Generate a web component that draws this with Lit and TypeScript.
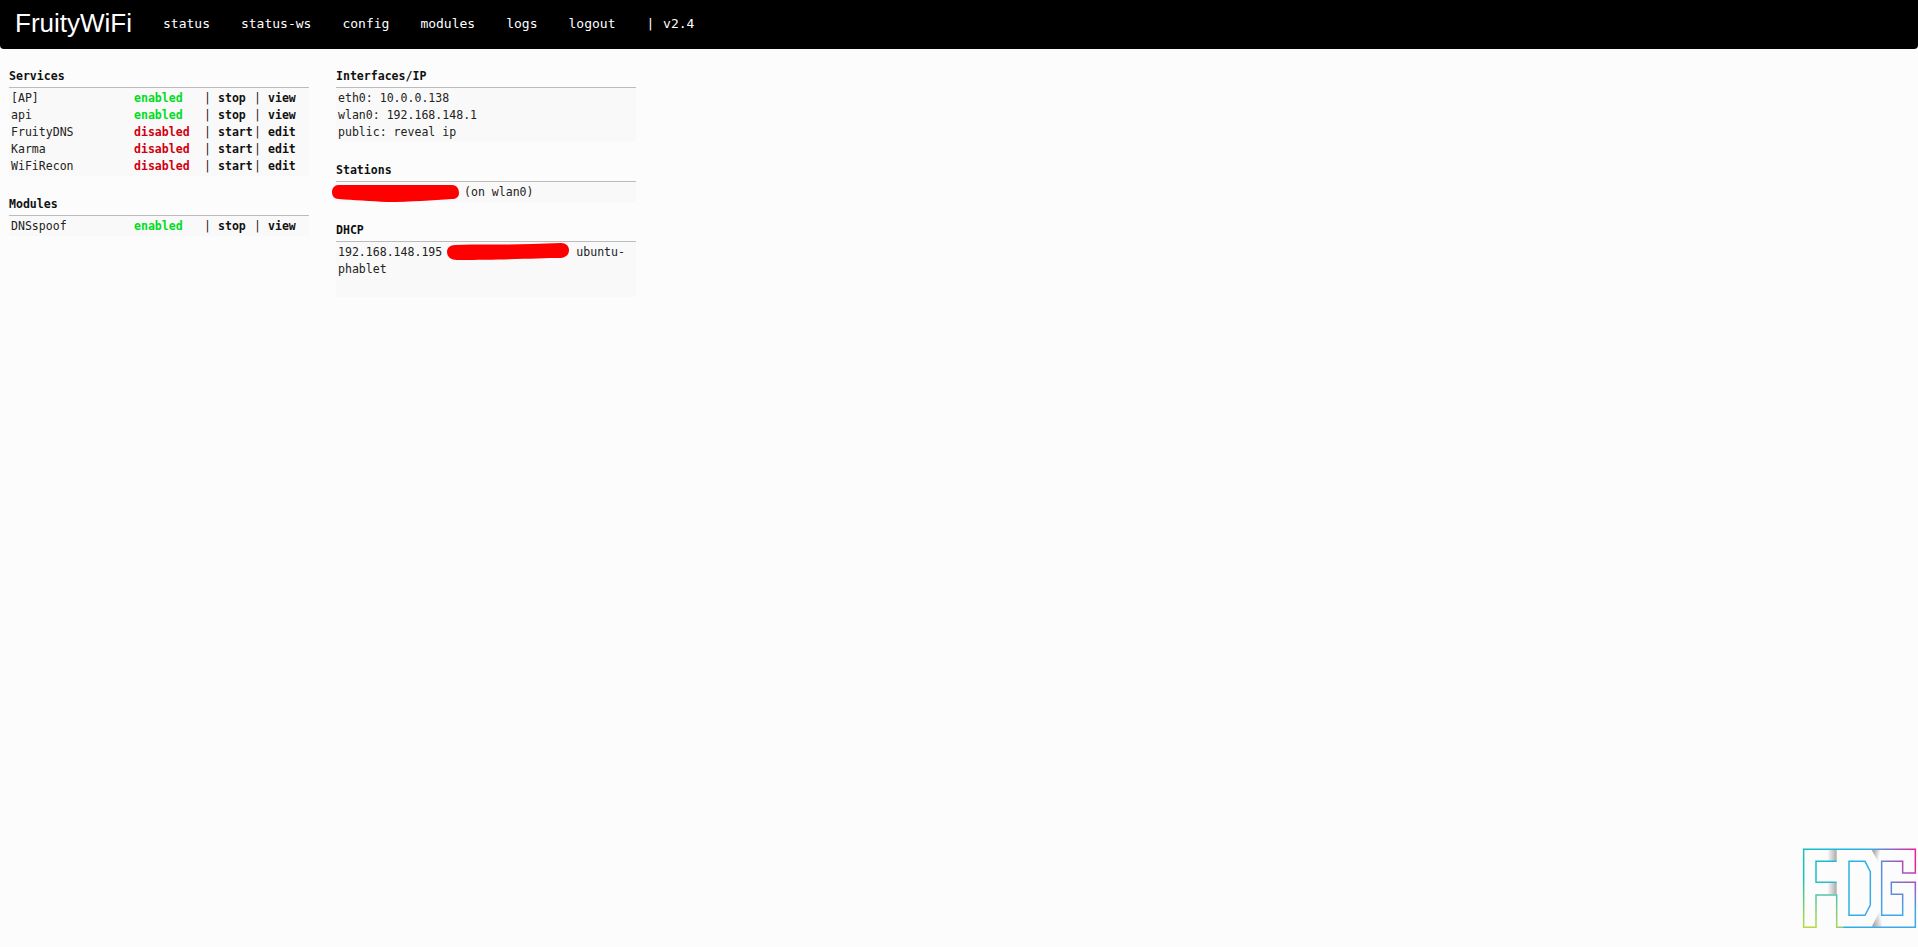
import { LitElement, html, css } from "lit";
import { customElement } from "lit/decorators.js";

const services = [
  ["[AP]", "enabled", "stop", "view"],
  ["api", "enabled", "stop", "view"],
  ["FruityDNS", "disabled", "start", "edit"],
  ["Karma", "disabled", "start", "edit"],
  ["WiFiRecon", "disabled", "start", "edit"],
];
const modules = [["DNSspoof", "enabled", "stop", "view"]];
const nav = ["status", "status-ws", "config", "modules", "logs", "logout"];

@customElement("app-root")
export class AppRoot extends LitElement {
  static styles = css`
    :host {
      display: block;
      min-height: 947px;
      background: #fcfcfc;
      font-family: "DejaVu Sans Mono", monospace;
      font-size: 11.55px;
      color: #222;
      position: relative;
      overflow: hidden;
    }
    .nav {
      height: 49px;
      box-sizing: border-box;
      padding-bottom: 2px;
      background: #000;
      border-radius: 0 0 4px 4px;
      display: flex;
      align-items: center;
      color: #fff;
      font-size: 13px;
    }
    .brand {
      font-family: "Liberation Sans", sans-serif;
      font-size: 26px;
      width: 163px;
      padding-left: 15px;
      box-sizing: border-box;
    }
    .links { display: flex; gap: 31px; }
    .ver { margin-left: 31px; word-spacing: 1px; }
    .page {
      display: flex;
      gap: 27px;
      padding: 20px 0 0 9px;
    }
    .col { width: 300px; display: flex; flex-direction: column; }
    .col.left { gap: 21px; }
    .col.right { gap: 21px; }
    .title {
      font-weight: bold;
      height: 18px;
      line-height: 14px;
      border-bottom: 1px solid #bbb;
      color: #111;
    }
    .body {
      background: #f9f9f9;
      padding: 2px 2px 1px;
      line-height: 17px;
    }
    .row {
      display: grid;
      grid-template-columns: 123px 70px 14px 36px 14px 1fr;
      height: 17px;
    }
    .st { font-weight: bold; }
    .on { color: #00dd22; }
    .off { color: #d00010; }
    .act { font-weight: bold; color: #111; }
    .scrib { display: inline-block; vertical-align: -4px; }
    .s1 { width: 127px; height: 17px; margin: 0 5px -2px -6px; }
    .s2 { width: 122px; height: 17px; margin: -2px 7px 0 5px; }
    .dhcp { height: 52px; }
    .wrapbox { width: 290px; }
    .logo { position: absolute; right: 0; bottom: 0; display: block; }
  `;

  private rows(list: string[][]) {
    return list.map(
      ([n, s, a, b]) => html`<div class="row">
        <span>${n}</span>
        <span class="st ${s === "enabled" ? "on" : "off"}">${s}</span>
        <span>|</span><span class="act">${a}</span><span>|</span><span class="act">${b}</span>
      </div>`
    );
  }

  render() {
    return html`
      <div class="nav">
        <div class="brand">FruityWiFi</div>
        <div class="links">${nav.map((t) => html`<span>${t}</span>`)}</div>
        <div class="ver">| v2.4</div>
      </div>
      <div class="page">
        <div class="col left">
          <section>
            <div class="title">Services</div>
            <div class="body">${this.rows(services)}</div>
          </section>
          <section>
            <div class="title">Modules</div>
            <div class="body">${this.rows(modules)}</div>
          </section>
        </div>
        <div class="col right">
          <section>
            <div class="title">Interfaces/IP</div>
            <div class="body">
              <div>eth0: 10.0.0.138</div>
              <div>wlan0: 192.168.148.1</div>
              <div>public: reveal ip</div>
            </div>
          </section>
          <section>
            <div class="title">Stations</div>
            <div class="body"><svg class="scrib s1" viewBox="0 0 127 17"><path fill="#f00" d="M6 0H120C125 0 127 4 127 8C127 12 124 14 120 14C100 15 80 17 55 17C40 16 20 15 7 14C2 14 0 11 0 7C0 3 3 0 6 0Z" /></svg>(on wlan0)</div>
          </section>
          <section>
            <div class="title">DHCP</div>
            <div class="body dhcp">
              <div class="wrapbox">192.168.148.195<svg class="scrib s2" viewBox="0 0 122 17"><path fill="#f00" d="M8 2C30 1 60 2 85 1L114 0C119 0 122 3 122 7C122 12 119 14 114 15C90 15 60 17 10 17C3 17 0 13 0 9C0 5 3 2 8 2Z" /></svg>ubuntu-<br />phablet</div>
            </div>
          </section>
        </div>
      </div>
      <svg class="logo" width="128" height="112" viewBox="0 0 384 336" fill="none">
        <defs>
          <linearGradient id="h" x1="0" x2="1" y1="0" y2="0">
            <stop offset="0" stop-color="#18c4a8" />
            <stop offset="0.35" stop-color="#18b8e0" />
            <stop offset="0.62" stop-color="#30b0e8" />
            <stop offset="1" stop-color="#f0189a" />
          </linearGradient>
          <linearGradient id="v" x1="0" x2="0" y1="0" y2="1">
            <stop offset="0.35" stop-color="#b8dc40" stop-opacity="0" />
            <stop offset="1" stop-color="#b8dc40" />
          </linearGradient>
          <linearGradient id="v2" x1="0" x2="0" y1="0" y2="1">
            <stop offset="0.2" stop-color="#40a8e8" stop-opacity="0" />
            <stop offset="0.8" stop-color="#40a8e8" />
          </linearGradient>
          <linearGradient id="hm2" x1="0" x2="1" y1="0" y2="0">
            <stop offset="0.3" stop-color="#000" />
            <stop offset="0.65" stop-color="#fff" />
          </linearGradient>
          <linearGradient id="sh1" x1="0" x2="1" y1="0" y2="0">
            <stop offset="0" stop-color="#aaa" stop-opacity="0" />
            <stop offset="1" stop-color="#aaa" />
          </linearGradient>
          <linearGradient id="sh2" x1="0" x2="1" y1="0" y2="0.4">
            <stop offset="0.2" stop-color="#aaa" />
            <stop offset="0.8" stop-color="#aaa" stop-opacity="0" />
          </linearGradient>
          <linearGradient id="sh3" x1="0" x2="1" y1="0.4" y2="0">
            <stop offset="0" stop-color="#aaa" />
            <stop offset="0.8" stop-color="#aaa" stop-opacity="0" />
          </linearGradient>
          <mask id="m2" maskUnits="userSpaceOnUse" x="0" y="0" width="384" height="336">
            <rect width="384" height="336" fill="url(#hm2)" />
          </mask>
          <g id="outline" stroke-width="4.5">
            <path d="M41 43H376V114H338V79H275V241H338V178H304V142H376V277H140V180H78V277H41Z" />
            <path d="M140 79H78V142H140" />
            <path d="M177 79H225L241 110V210L225 241H177Z" />
          </g>
          <mask id="lines" maskUnits="userSpaceOnUse" x="0" y="0" width="384" height="336">
            <use href="#outline" stroke="#fff" />
          </mask>
        </defs>
        <path d="M112 45H140V78H112Z" fill="url(#sh1)" />
        <path d="M112 143H140V178H112Z" fill="url(#sh1)" />
        <path d="M245 45L275 100V45Z" fill="url(#sh2)" />
        <path d="M245 275L275 218V275Z" fill="url(#sh3)" />
        <g mask="url(#lines)">
          <rect width="384" height="336" fill="url(#h)" />
          <rect x="30" y="40" width="130" height="240" fill="url(#v)" />
          <rect x="140" y="40" width="244" height="240" fill="url(#v2)" mask="url(#m2)" />
        </g>
      </svg>
    `;
  }
}
